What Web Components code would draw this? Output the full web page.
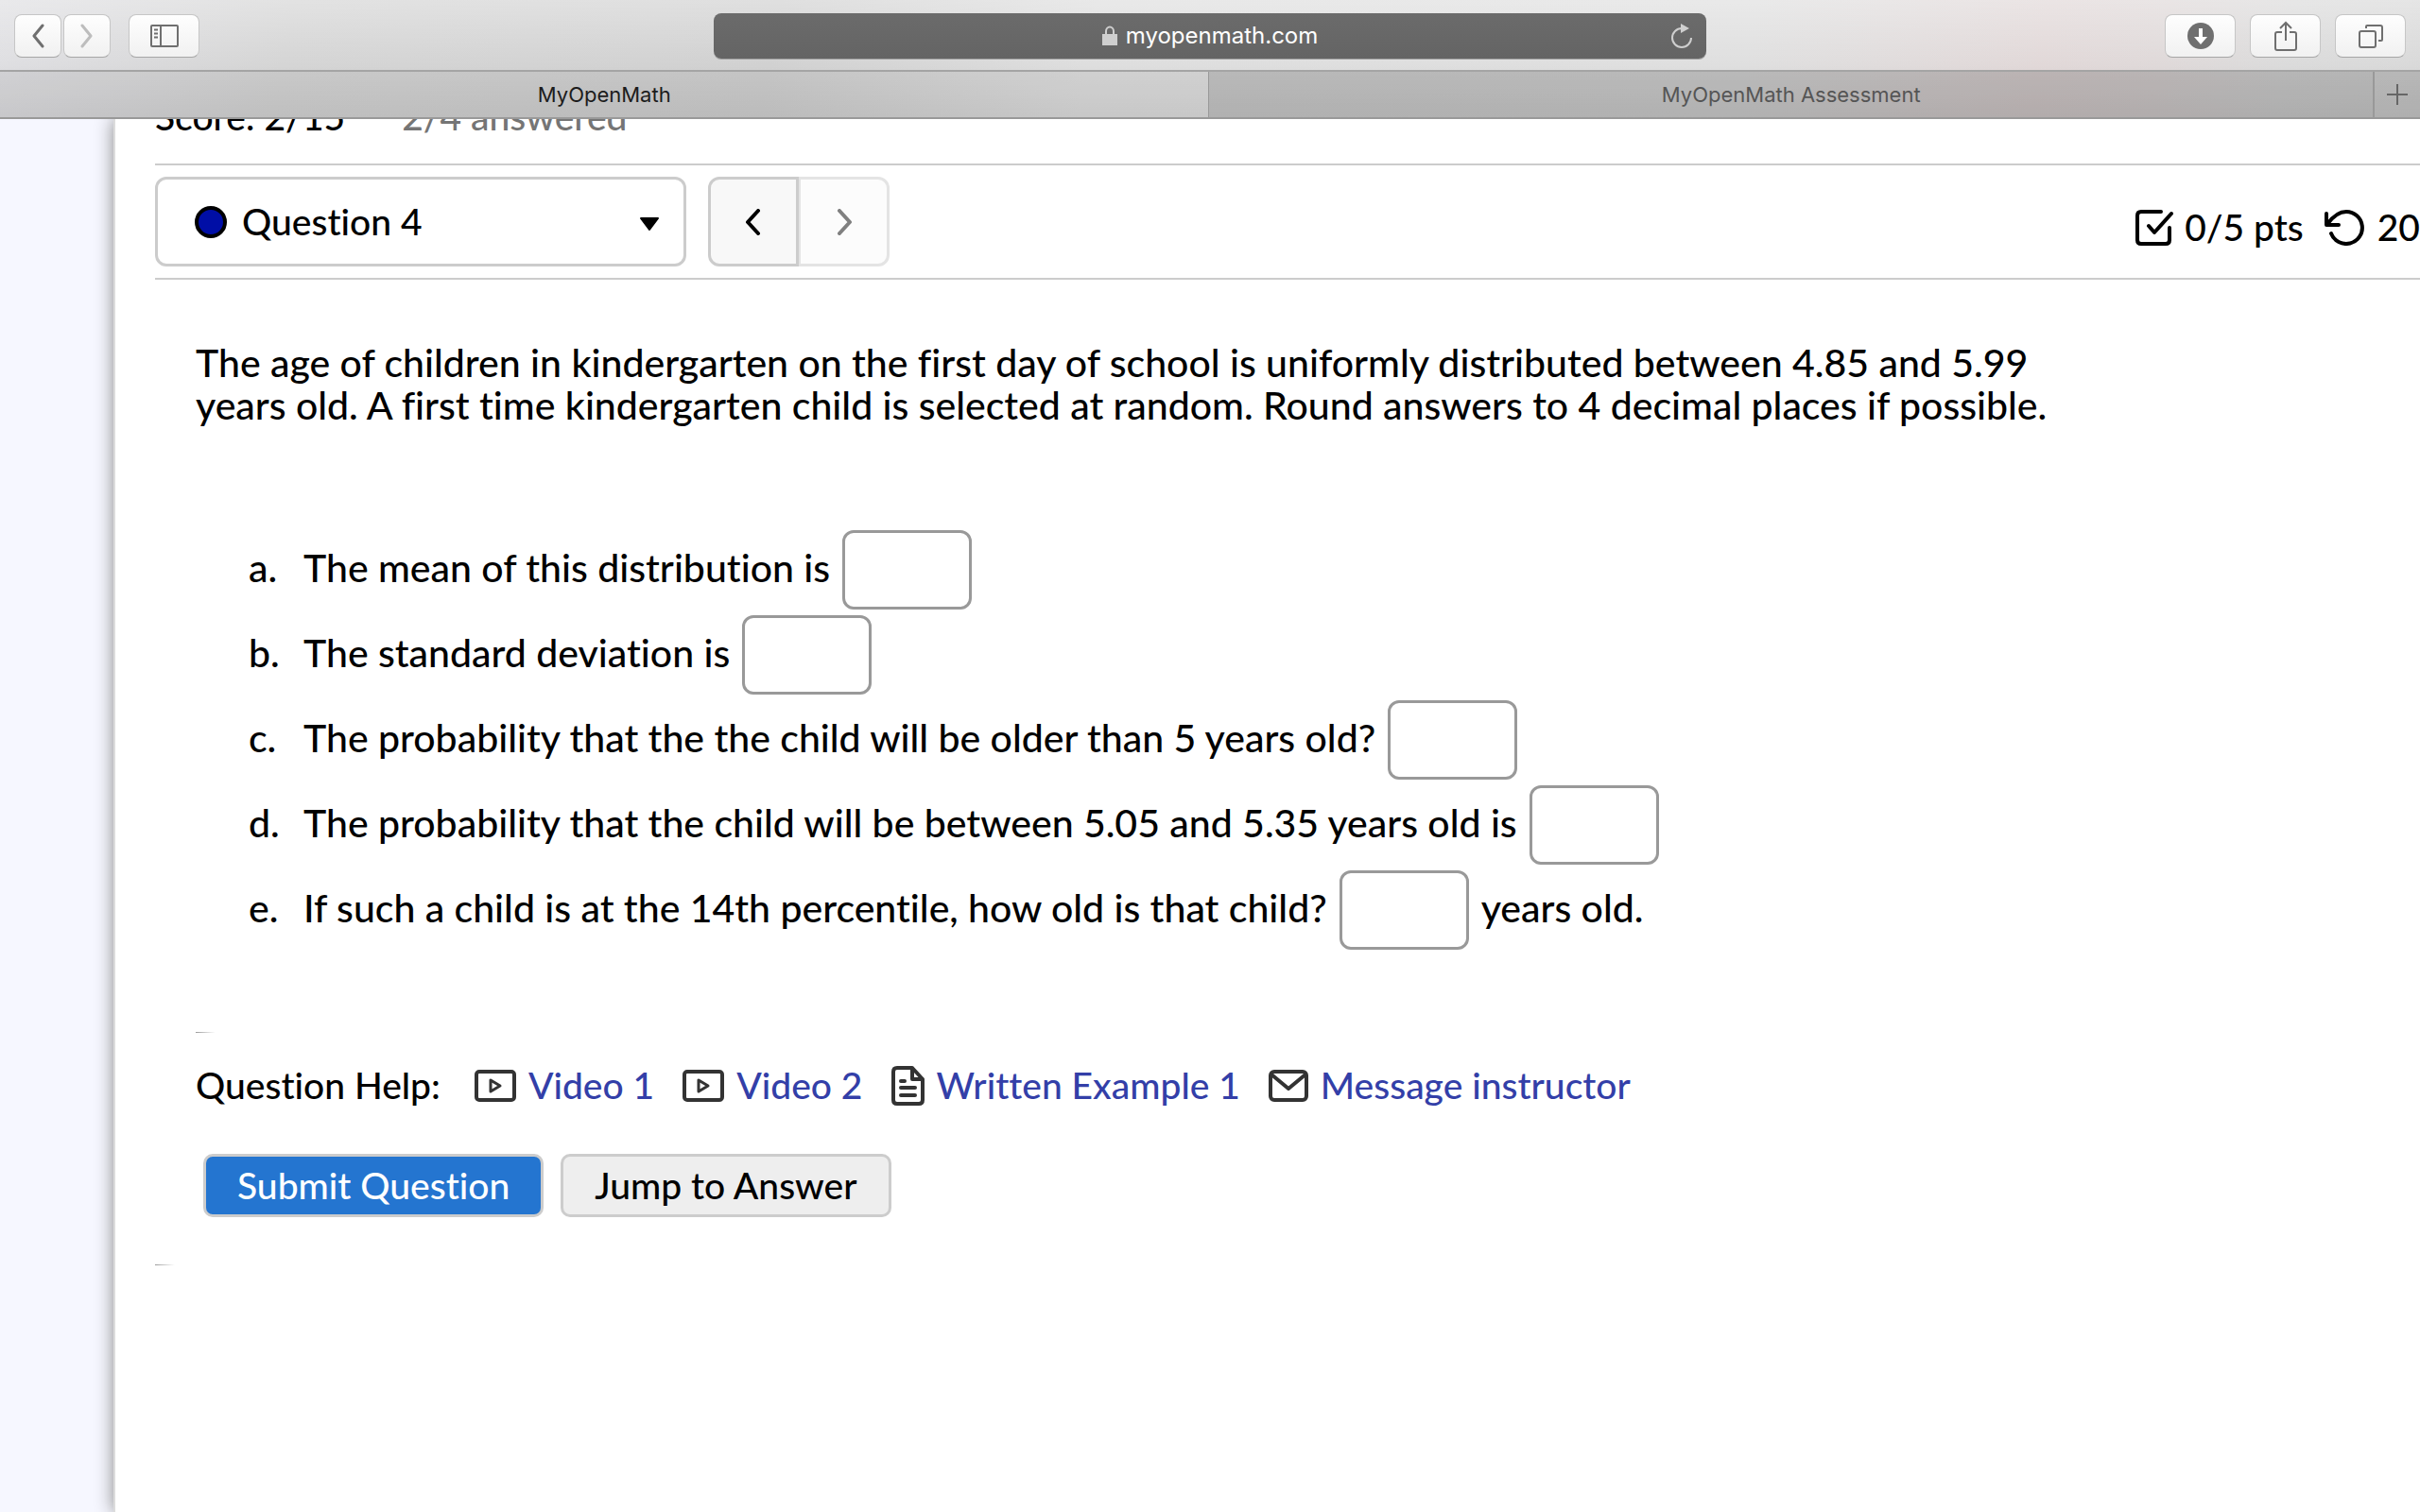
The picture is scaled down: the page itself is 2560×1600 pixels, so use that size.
<!DOCTYPE html>
<html lang="en">
<head>
<meta charset="utf-8">
<title>MyOpenMath</title>
<style>
    html, body {
        margin: 0;
        height: 100%;
        overflow: hidden;
    }
    body {
        display: flex;
        flex-direction: column;
        background: #fff;
        color: #000;
        font-family: Lato, "Open Sans", sans-serif;
        font-size: 41px;
        font-weight: 500;
        font-variant-ligatures: none;
        line-height: 45px;
    }
</style>
</head>
<body>
<browser-bar address="myopenmath.com">
    <browser-tab active>MyOpenMath</browser-tab>
    <browser-tab>MyOpenMath Assessment</browser-tab>
</browser-bar>
<quiz-page>
    <score-line slot="score" score="Score: 2/15" answered="2/4 answered"></score-line>
    <question-header slot="header" question="Question 4" points="0/5 pts" tries="20"></question-header>
    <question-text>
        The age of children in kindergarten on the first day of school is uniformly distributed between 4.85 and 5.99<br>
        years old. A first time kindergarten child is selected at random. Round answers to 4 decimal places if possible.
    </question-text>
    <answer-list>
        <answer-part marker="a.">The mean of this distribution is</answer-part>
        <answer-part marker="b.">The standard deviation is</answer-part>
        <answer-part marker="c.">The probability that the the child will be older than 5 years old?</answer-part>
        <answer-part marker="d.">The probability that the child will be between 5.05 and 5.35 years old is</answer-part>
        <answer-part marker="e.">If such a child is at the 14th percentile, how old is that child?<span slot="after">years old.</span></answer-part>
    </answer-list>
    <question-help>
        <help-link icon="video">Video 1</help-link>
        <help-link icon="video">Video 2</help-link>
        <help-link icon="file">Written Example 1</help-link>
        <help-link icon="mail">Message instructor</help-link>
    </question-help>
    <question-actions></question-actions>
</quiz-page>

<script>
class BrowserBar extends HTMLElement {
    constructor() {
        super();
        this.shadow = this.attachShadow({mode: 'open'});
    }
    connectedCallback() {
        this.render();
    }
    render() {
        this.shadow.innerHTML = `
        <style>
            :host {
                display: block;
                position: relative;
                z-index: 1;
                font-family: Inter, Roboto, sans-serif;
                font-weight: 400;
                background:
                    linear-gradient(rgba(255, 255, 255, 0.3), rgba(255, 255, 255, 0) 50%, rgba(0, 0, 0, 0.06)),
                    linear-gradient(100deg, #e0e0e3 0%, #d6d6d6 12%, #d2d2d2 32%, #dfdfdf 45%, #e0e0e0 72%, #e2d9d9 84%, #e0dada 89%, #dcdcdc 94%, #dadada 100%);
            }
            .toolbar {
                display: grid;
                grid-template-columns: 1fr 1050px 1fr;
                align-items: center;
                box-sizing: border-box;
                height: 74px;
                padding: 2px 15px 0;
            }
            .group {
                display: flex;
                gap: 2px;
            }
            .left {
                display: flex;
                gap: 19px;
            }
            .right {
                display: flex;
                justify-content: flex-end;
                gap: 15px;
            }
            button {
                display: flex;
                align-items: center;
                justify-content: center;
                width: 75px;
                height: 46px;
                padding: 0;
                border: 1px solid #c6c6c6;
                border-bottom-color: #a6a6a6;
                border-radius: 8px;
                background: linear-gradient(#fefefe, #f1f1f1);
                color: #6f6f6f;
            }
            .group button {
                width: 50px;
            }
            .group button[disabled] {
                color: #bdbdbd;
            }
            .address {
                display: grid;
                grid-template-columns: 1fr auto 1fr;
                align-items: center;
                height: 48px;
                padding: 0 14px;
                box-sizing: border-box;
                border-radius: 8px;
                background: linear-gradient(#6b6b6b, #646464);
                box-shadow: 0 1px 0 #a0a0a0;
                color: #fff;
                font-size: 24px;
                line-height: 30px;
            }
            .site {
                grid-column: 2;
                display: flex;
                align-items: center;
                gap: 9px;
            }
            .address button {
                justify-self: end;
                width: 24px;
                height: 30px;
                border: 0;
                background: none;
                color: #cfcfcf;
            }
            .tabs {
                display: flex;
                height: 48px;
                border-top: 2px solid #a4a4a4;
                border-bottom: 2px solid #999;
            }
            .tabs .add {
                width: 50px;
                height: 48px;
                border: 0;
                border-left: 2px solid #999;
                border-radius: 0;
                background: rgba(0, 0, 0, 0.15);
                color: #666;
            }
            svg {
                display: block;
                fill: none;
                stroke: currentColor;
            }
        </style>
        <div class="toolbar">
            <div class="left">
                <div class="group">
                    <button aria-label="Back"><svg width="14" height="26" stroke-width="3" stroke-linecap="round" stroke-linejoin="round"><path d="M12 2 3 13l9 11"/></svg></button>
                    <button aria-label="Forward" disabled><svg width="14" height="26" stroke-width="3" stroke-linecap="round" stroke-linejoin="round"><path d="m2 2 9 11-9 11"/></svg></button>
                </div>
                <button aria-label="Show sidebar"><svg width="30" height="24" stroke-width="2"><rect x="1" y="1" width="28" height="22" rx="1"/><path d="M11 1v22M4 5.500h4M4 9.500h4M4 13.500h4"/></svg></button>
            </div>
            <div class="address">
                <div class="site">
                    <svg width="16" height="22" color="#cfcfcf" stroke-width="2"><path d="M4 10V6a4 4.500 0 0 1 8 0v4"/><rect width="16" height="12" y="9" fill="currentColor" stroke="none"/></svg>
                    <span>${this.getAttribute('address')}</span>
                </div>
                <button aria-label="Reload"><svg width="24" height="28" stroke-width="2"><path d="M12 6a10 10 0 1 0 10 10"/><path d="M11 1v10l9-5z" fill="currentColor" stroke="none"/></svg></button>
            </div>
            <div class="right">
                <button aria-label="Downloads"><svg width="28" height="28" stroke="none"><circle cx="14" cy="14" r="14" fill="currentColor" stroke="none"/><path d="M12 6h4v9h5l-7 8-7-8h5z" fill="#fff" stroke="none"/></svg></button>
                <button aria-label="Share"><svg width="24" height="32" stroke-width="2"><path d="M8 12H3q-2 0-2 2v15q0 2 2 2h18q2 0 2-2V14q0-2-2-2h-5M12 21V2M6 8l6-6 6 6"/></svg></button>
                <button aria-label="Show all tabs"><svg width="26" height="26" stroke-width="2"><rect x="1" y="8" width="17" height="17" rx="2"/><path d="M8 5V3q0-1 1-1h14q2 0 2 2v13q0 1-1 1h-3"/></svg></button>
            </div>
        </div>
        <div class="tabs">
            <slot></slot>
            <button class="add" aria-label="New tab"><svg width="22" height="22" stroke-width="2"><path d="M11 0v22M0 11h22"/></svg></button>
        </div>`;
    }
}

class BrowserTab extends HTMLElement {
    constructor() {
        super();
        this.shadow = this.attachShadow({mode: 'open'});
        this.shadow.innerHTML = `
        <style>
            :host {
                flex: 1231;
                display: flex;
                align-items: center;
                justify-content: center;
                background: rgba(0, 0, 0, 0.16);
                color: #555;
                font-size: 22px;
                line-height: 28px;
            }
            :host([active]) {
                flex: 1279;
                background: rgba(0, 0, 0, 0.05);
                border-right: 1px solid #999;
                color: #1c1c1c;
            }
        </style>
        <slot></slot>`;
    }
}

class QuizPage extends HTMLElement {
    constructor() {
        super();
        this.shadow = this.attachShadow({mode: 'open'});
        this.shadow.innerHTML = `
        <style>
            :host {
                flex: 1;
                display: flex;
                min-height: 0;
                padding-left: 120px;
                overflow: hidden;
                background: #f6f7ff;
            }
            main {
                flex: 1;
                min-width: 0;
                padding-left: 42px;
                border-left: 2px solid #dcdcdc;
                background: #fff;
                box-shadow: 0 0 18px #888;
            }
            .body {
                padding: 65px 43px 0;
            }
            /* dividers that fade out to the right */
            .fade {
                width: 26px;
                height: 1px;
                background: linear-gradient(90deg, #999, #fff 80%);
            }
        </style>
        <main>
            <slot name="score"></slot>
            <slot name="header"></slot>
            <div class="body"><slot></slot></div>
            <div class="fade"></div>
        </main>`;
    }
}

class ScoreLine extends HTMLElement {
    constructor() {
        super();
        this.shadow = this.attachShadow({mode: 'open'});
    }
    connectedCallback() {
        this.render();
    }
    render() {
        // scrolled partly under the browser bar
        this.shadow.innerHTML = `
        <style>
            :host {
                display: flex;
                gap: 60px;
                margin-top: -25px;
                padding-bottom: 27px;
                font-size: 39px;
            }
            .answered {
                color: #757575;
            }
        </style>
        <span>${this.getAttribute('score')}</span>
        <span class="answered">${this.getAttribute('answered')}</span>`;
    }
}

class QuestionHeader extends HTMLElement {
    constructor() {
        super();
        this.shadow = this.attachShadow({mode: 'open'});
    }
    connectedCallback() {
        this.render();
    }
    render() {
        this.shadow.innerHTML = `
        <style>
            :host {
                display: flex;
                align-items: center;
                gap: 23px;
                padding: 12px 0;
                border-top: 2px solid #ccc;
                border-bottom: 2px solid #ccc;
                font-size: 39px;
            }
            button {
                display: flex;
                align-items: center;
                box-sizing: border-box;
                height: 95px;
                border: 3px solid #ccc;
                border-radius: 12px;
                background: #fff;
                color: #000;
                font: inherit;
            }
            .picker {
                width: 562px;
                padding: 0 25px 0 39px;
                gap: 16px;
            }
            .picker .arrow {
                margin-left: auto;
                stroke-width: 2;
            }
            .nav {
                display: flex;
            }
            .nav button {
                width: 96px;
                justify-content: center;
                background: #f8f8f8;
                border-radius: 12px 0 0 12px;
            }
            .nav button[disabled] {
                border-color: #e4e4e4;
                border-left-width: 2px;
                border-radius: 0 12px 12px 0;
                background: #fcfcfc;
                color: #808080;
            }
            .stats {
                display: flex;
                align-items: center;
                gap: 12px;
                margin-left: auto;
                padding-top: 12px;
                white-space: nowrap;
            }
            .stats .undo {
                margin-left: 10px;
            }
            svg {
                display: block;
                flex: none;
                fill: none;
                stroke: currentColor;
                stroke-width: 4;
                stroke-linecap: round;
                stroke-linejoin: round;
            }
        </style>
        <button class="picker" aria-haspopup="listbox">
            <svg width="34" height="34"><circle cx="17" cy="17" r="15" fill="#000ea6"/></svg>
            <span>${this.getAttribute('question')}</span>
            <svg class="arrow" width="22" height="20"><path d="M2 6h18l-9 12z" fill="currentColor"/></svg>
        </button>
        <div class="nav">
            <button aria-label="Previous question"><svg width="16" height="28"><path d="M13 2 2 14l11 12"/></svg></button>
            <button aria-label="Next question" disabled><svg width="16" height="28"><path d="m3 2 11 12L3 26"/></svg></button>
        </div>
        <div class="stats">
            <svg width="40" height="38"><path d="M27 2H6q-4 0-4 4v26q0 4 4 4h26q4 0 4-4V19M14 17l6 7L38 4"/></svg>
            <span>${this.getAttribute('points')}</span>
            <svg class="undo" width="44" height="38"><path d="M2 4v12h13M3 15C9 7 15 2 23 2a17 17 0 1 1-16 23"/></svg>
            <span>${this.getAttribute('tries')}</span>
        </div>`;
    }
}

class QuestionText extends HTMLElement {
    constructor() {
        super();
        this.shadow = this.attachShadow({mode: 'open'});
        this.shadow.innerHTML = `
        <style>
            :host {
                display: block;
            }
            p {
                margin: 0;
            }
        </style>
        <p><slot></slot></p>`;
    }
}

class AnswerList extends HTMLElement {
    constructor() {
        super();
        this.shadow = this.attachShadow({mode: 'open'});
        this.shadow.innerHTML = `
        <style>
            :host {
                display: flex;
                flex-direction: column;
                padding: 104px 0 87px 56px;
            }
        </style>
        <slot></slot>`;
    }
}

class AnswerPart extends HTMLElement {
    constructor() {
        super();
        this.shadow = this.attachShadow({mode: 'open'});
    }
    connectedCallback() {
        this.render();
    }
    render() {
        this.shadow.innerHTML = `
        <style>
            :host {
                display: flex;
                align-items: center;
                gap: 13px;
            }
            .marker {
                width: 45px;
            }
            input {
                box-sizing: border-box;
                width: 137px;
                height: 84px;
                margin: 6px 0 0;
                padding: 0 12px;
                border: 3px solid #999;
                border-radius: 12px;
                background: #fff;
                font: inherit;
            }
        </style>
        <span class="marker">${this.getAttribute('marker')}</span>
        <label for="answer"><slot></slot></label>
        <input id="answer" type="text" autocomplete="off">
        <slot name="after"></slot>`;
    }
}

class QuestionHelp extends HTMLElement {
    constructor() {
        super();
        this.shadow = this.attachShadow({mode: 'open'});
        this.shadow.innerHTML = `
        <style>
            :host {
                display: block;
                font-size: 39px;
            }
            .fade {
                width: 26px;
                height: 1px;
                margin-bottom: 33px;
                background: linear-gradient(90deg, #999, #fff 80%);
            }
            .row {
                display: flex;
                align-items: center;
                gap: 30px;
            }
            .title {
                margin-right: 6px;
            }
        </style>
        <div class="fade"></div>
        <div class="row">
            <span class="title">Question Help:</span>
            <slot></slot>
        </div>`;
    }
}

class HelpLink extends HTMLElement {
    get icons() {
        return {
            video: '<svg width="44" height="34"><rect x="2" y="2" width="40" height="30" rx="3"/><path d="M17 11v12l10-6z" stroke-width="3"/></svg>',
            file: '<svg width="35" height="42"><path d="M6 2h16l11 12v22q0 4-4 4H6q-4 0-4-4V6q0-4 4-4zM22 2v12h11M10 16h4M10 23h15M10 31h15"/></svg>',
            mail: '<svg width="42" height="34"><rect x="2" y="2" width="38" height="30" rx="4"/><path d="m3 5 18 15L39 5"/></svg>'
        };
    }
    constructor() {
        super();
        this.shadow = this.attachShadow({mode: 'open'});
    }
    connectedCallback() {
        this.render();
    }
    render() {
        this.shadow.innerHTML = `
        <style>
            :host {
                display: block;
            }
            a {
                display: flex;
                align-items: center;
                gap: 13px;
                color: #333fa8;
                text-decoration: none;
            }
            svg {
                display: block;
                color: #333;
                fill: none;
                stroke: currentColor;
                stroke-width: 4;
                stroke-linecap: round;
                stroke-linejoin: round;
            }
        </style>
        <a href="#">${this.icons[this.getAttribute('icon')]}<slot></slot></a>`;
    }
}

class QuestionActions extends HTMLElement {
    constructor() {
        super();
        this.shadow = this.attachShadow({mode: 'open'});
        this.shadow.innerHTML = `
        <style>
            :host {
                display: flex;
                gap: 18px;
                padding: 50px 8px;
            }
            button {
                height: 67px;
                padding: 0 33px;
                border: 3px solid #ccc;
                border-radius: 10px;
                background: #eee;
                color: #000;
                font: inherit;
                font-size: 39px;
            }
            .primary {
                background: #2475d0;
                color: #fff;
            }
        </style>
        <button class="primary">Submit Question</button>
        <button>Jump to Answer</button>`;
    }
}

customElements.define('browser-bar', BrowserBar);
customElements.define('browser-tab', BrowserTab);
customElements.define('quiz-page', QuizPage);
customElements.define('score-line', ScoreLine);
customElements.define('question-header', QuestionHeader);
customElements.define('question-text', QuestionText);
customElements.define('answer-list', AnswerList);
customElements.define('answer-part', AnswerPart);
customElements.define('question-help', QuestionHelp);
customElements.define('help-link', HelpLink);
customElements.define('question-actions', QuestionActions);
</script>
</body>
</html>
